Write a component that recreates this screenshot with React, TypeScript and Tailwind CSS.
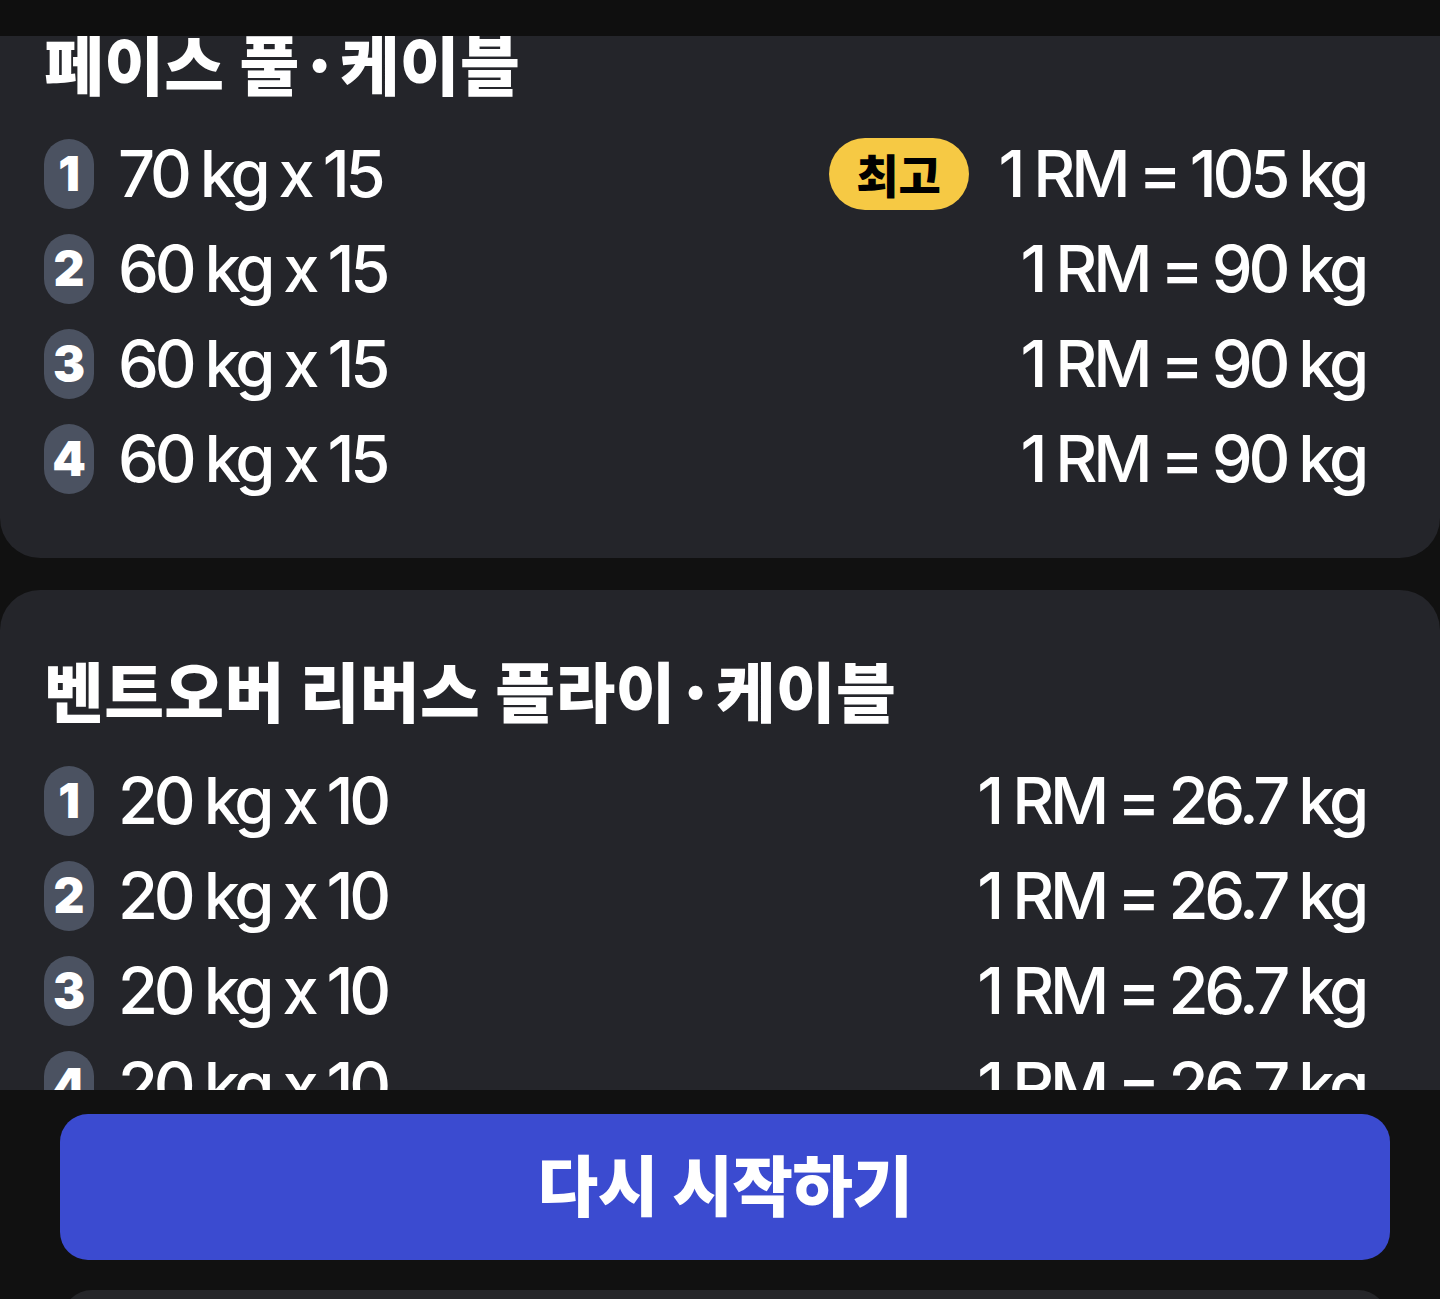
const latin = "font-['Inter','Noto_Sans_CJK_KR',sans-serif]";
const korean = "font-['Noto_Sans_CJK_KR',sans-serif]";

type SetRow = { n: number; weight: string; reps: number; rm: string; best?: boolean };

const exercises: { title: string; sets: SetRow[] }[] = [
  {
    title: "페이스 풀·케이블",
    sets: [
      { n: 1, weight: "70", reps: 15, rm: "105", best: true },
      { n: 2, weight: "60", reps: 15, rm: "90" },
      { n: 3, weight: "60", reps: 15, rm: "90" },
      { n: 4, weight: "60", reps: 15, rm: "90" },
    ],
  },
  {
    title: "벤트오버 리버스 플라이·케이블",
    sets: [
      { n: 1, weight: "20", reps: 10, rm: "26.7" },
      { n: 2, weight: "20", reps: 10, rm: "26.7" },
      { n: 3, weight: "20", reps: 10, rm: "26.7" },
      { n: 4, weight: "20", reps: 10, rm: "26.7" },
    ],
  },
];

function Row({ row }: { row: SetRow }) {
  return (
    <div className="flex h-[95px] items-center justify-between">
      <div className="flex items-center gap-[24px]">
        <span
          className={`flex h-[70px] w-[50px] items-center justify-center rounded-full bg-[#4b5261] text-[48px] font-black leading-none text-white ${latin}`}
        >
          {row.n}
        </span>
        <span
          className={`text-[65px] font-medium leading-none tracking-[-0.065em] [word-spacing:-1px] text-white ${latin}`}
        >
          {row.weight} kg x {row.reps}
        </span>
      </div>
      <div className="flex items-center gap-[30px]">
        {row.best && (
          <span
            className={`flex h-[72px] w-[140px] items-center justify-center rounded-full bg-[#f6c944] text-[46px] font-black text-black ${korean}`}
          >
            최고
          </span>
        )}
        <span
          className={`text-[65px] font-medium leading-none tracking-[-0.065em] [word-spacing:-1px] text-white ${latin}`}
        >
          1 RM = {row.rm} kg
        </span>
      </div>
    </div>
  );
}

function Card({ title, sets, className }: { title: string; sets: SetRow[]; className?: string }) {
  return (
    <section className={`rounded-[40px] bg-[#24252a] pb-[52px] pl-[44px] pr-[75px] pt-[65px] ${className ?? ""}`}>
      <h2
        className={`mb-[18px] h-[80px] whitespace-nowrap text-[65px] font-black leading-[68px] tracking-[0.005em] text-white ${korean}`}
      >
        {title}
      </h2>
      {sets.map((s) => (
        <Row key={s.n} row={s} />
      ))}
    </section>
  );
}

export default function App() {
  return (
    <div className="flex h-[1299px] w-[1440px] flex-col overflow-hidden bg-[#111111]">
      <div className="h-[36px] shrink-0 bg-[#0f0f0f]" />
      <main className="flex flex-1 flex-col gap-[32px] overflow-hidden">
        <Card title={exercises[0].title} sets={exercises[0].sets} className="-mt-[73px]" />
        <Card title={exercises[1].title} sets={exercises[1].sets} />
      </main>
      <footer className="flex h-[209px] shrink-0 flex-col overflow-hidden bg-[#111111] pl-[60px] pr-[50px] pt-[24px]">
        <button
          className={`flex h-[146px] w-full shrink-0 items-center justify-center rounded-[28px] bg-[#3b4bd0] pb-[10px] text-[66px] font-black tracking-[-0.01em] text-white ${korean}`}
        >
          다시 시작하기
        </button>
        <div className="mx-[2px] mt-[30px] h-[40px] shrink-0 rounded-t-[30px] bg-[#252629]" />
      </footer>
    </div>
  );
}
